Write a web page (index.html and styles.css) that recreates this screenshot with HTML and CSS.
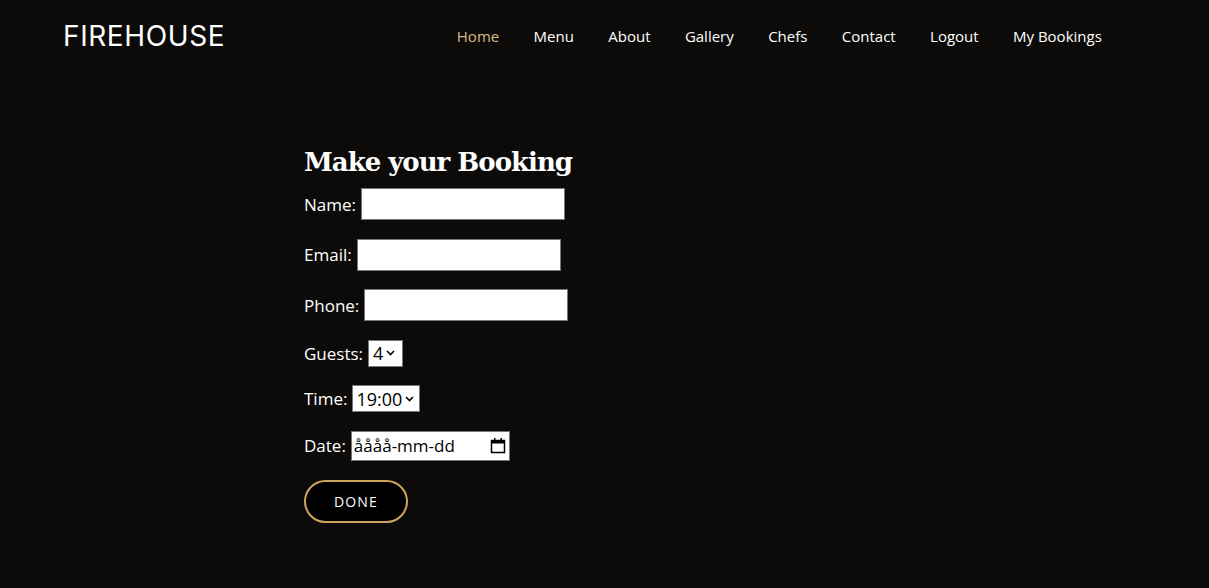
FILE: index.html
```html
<!DOCTYPE html>
<html lang="en">
<head>
<meta charset="utf-8">
<title>Firehouse - Make your Booking</title>
<link rel="stylesheet" href="styles.css">
</head>
<body>
<header class="header">
  <a class="logo" href="#">FIREHOUSE</a>
  <nav class="nav">
    <a class="nav-link active" href="#">Home</a>
    <a class="nav-link" href="#">Menu</a>
    <a class="nav-link" href="#">About</a>
    <a class="nav-link" href="#">Gallery</a>
    <a class="nav-link" href="#">Chefs</a>
    <a class="nav-link" href="#">Contact</a>
    <a class="nav-link" href="#">Logout</a>
    <a class="nav-link" href="#">My Bookings</a>
  </nav>
</header>
<main class="main">
  <form class="booking">
    <h2 class="title">Make your Booking</h2>
    <div class="row"><label class="lbl" for="name">Name:</label><input class="field" id="name" type="text"></div>
    <div class="row"><label class="lbl" for="email">Email:</label><input class="field" id="email" type="email"></div>
    <div class="row"><label class="lbl" for="phone">Phone:</label><input class="field" id="phone" type="tel"></div>
    <div class="row"><label class="lbl" for="guests">Guests:</label>
      <div class="select sel-guests"><span>4</span><svg class="chev" width="9" height="6" viewBox="0 0 9 6"><path d="M1 1l3.5 3.5L8 1" fill="none" stroke="#000" stroke-width="1.6"/></svg></div>
    </div>
    <div class="row"><label class="lbl" for="time">Time:</label>
      <div class="select sel-time"><span>19:00</span><svg class="chev" width="9" height="6" viewBox="0 0 9 6"><path d="M1 1l3.5 3.5L8 1" fill="none" stroke="#000" stroke-width="1.6"/></svg></div>
    </div>
    <div class="row"><label class="lbl" for="date">Date:</label>
      <div class="date"><span>åååå-mm-dd</span><svg width="16" height="17" viewBox="0 0 16 17"><rect x="1.5" y="3.5" width="13" height="12" fill="none" stroke="#000" stroke-width="1.5"/><rect x="1.5" y="3.5" width="13" height="3" fill="#000"/><rect x="4" y="1" width="1.5" height="3" fill="#000"/><rect x="10.5" y="1" width="1.5" height="3" fill="#000"/></svg></div>
    </div>
    <button class="btn" type="button">DONE</button>
  </form>
</main>
</body>
</html>
```
FILE: styles.css
```css
html, body {
  margin: 0;
  padding: 0;
  background: #0c0b09;
  color: #fff;
  font-family: "Open Sans", "Liberation Sans", sans-serif;
}
.header {
  display: flex;
  align-items: center;
  justify-content: space-between;
  height: 72px;
  padding: 0 90px 0 63px;
}
.logo {
  font-family: "Inter", "Lato", sans-serif;
  font-size: 28px;
  font-weight: 400;
  letter-spacing: 0.6px;
  color: #fff;
  text-decoration: none;
}
.nav {
  display: flex;
}
.nav-link {
  font-size: 15px;
  font-weight: 500;
  color: #fff;
  text-decoration: none;
  padding: 0 17.2px;
}
.nav-link.active {
  color: #d9ba85;
}
.main {
  padding: 71px 0 0 304px;
}
.booking {
  display: flex;
  flex-direction: column;
  align-items: flex-start;
}
.title {
  font-family: "DejaVu Serif", "Liberation Serif", serif;
  font-size: 26px;
  font-weight: 700;
  letter-spacing: -1px;
  margin: 0 0 7px;
  line-height: 38px;
}
.row {
  display: flex;
  align-items: center;
  margin-bottom: 18.6px;
  font-size: 17px;
}
.lbl {
  margin-right: 5px;
}
.field {
  width: 204px;
  height: 32px;
  box-sizing: border-box;
  border: 1px solid #767676;
  background: #fff;
  margin: 0;
  padding: 0 4px;
}
.select {
  display: flex;
  align-items: center;
  box-sizing: border-box;
  height: 27px;
  background: #fff;
  border: 1px solid #767676;
  color: #000;
  font-size: 18px;
  padding: 0 3px 0 4px;
  gap: 3px;
}
.sel-guests { width: 35px; }
.sel-time { width: 68px; padding-left: 3px; }
.date {
  display: flex;
  align-items: center;
  justify-content: space-between;
  box-sizing: border-box;
  width: 159px;
  height: 30px;
  background: #fff;
  border: 1px solid #767676;
  color: #000;
  font-size: 17px;
  padding: 0 3px 0 2px;
}
.btn {
  margin-top: 0;
  width: 104px;
  height: 43px;
  border: 2px solid #cda45e;
  border-radius: 22px;
  background: #000;
  color: #fff;
  font-family: "Open Sans", "Liberation Sans", sans-serif;
  font-size: 14px;
  letter-spacing: 1.2px;
  cursor: pointer;
}
```
